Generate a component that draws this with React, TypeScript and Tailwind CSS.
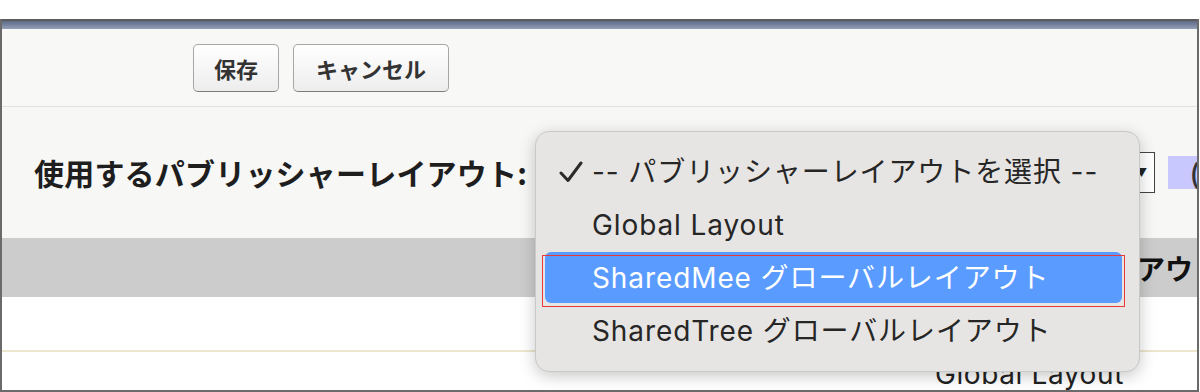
import React from 'react';

const jp = { fontFamily: '"Noto Sans CJK JP", "Noto Sans", sans-serif' };
const menuFont = { fontFamily: 'Inter, "Noto Sans CJK JP", sans-serif' };

function Btn({ label, width }: { label: string; width: string }) {
  return (
    <button
      className={`${width} h-[48px] rounded-[5px] border border-[#a6a6a6] border-b-[#7d7d7d] bg-gradient-to-b from-white to-[#ededed] text-[22px] font-bold text-[#333] leading-none`}
      style={jp}
    >
      {label}
    </button>
  );
}

const options = [
  { label: '-- パブリッシャーレイアウトを選択 --', checked: true },
  { label: 'Global Layout' },
  { label: 'SharedMee グローバルレイアウト', active: true },
  { label: 'SharedTree グローバルレイアウト' },
];

export default function App() {
  return (
    <div className="h-[392px] w-[1200px] overflow-hidden bg-white pt-[19px]">
      <div className="relative h-[373px] w-[1199px] overflow-hidden whitespace-nowrap border-x-2 border-b-2 border-[#6a6a6a]">
        {/* title strip */}
        <div className="h-[10px] border-t-2 border-[#5c5c5c] bg-gradient-to-b from-[#5d6a86] to-[#95a0b8]" />

        {/* buttons */}
        <div className="flex h-[78px] items-center gap-[14px] border-b border-[#e3e3e1] bg-[#f8f8f6] pl-[191px]">
          <Btn label="保存" width="w-[86px]" />
          <Btn label="キャンセル" width="w-[156px]" />
        </div>

        {/* layout select row */}
        <div className="flex h-[131px] items-center bg-[#f7f7f5] pl-[32px]" style={jp}>
          <span className="text-[30px] font-bold tracking-[0.2px] text-[#1e1e1e]">使用するパブリッシャーレイアウト:</span>
          <div className="flex-1" />
          <div className="flex h-[41px] w-[180px] items-center justify-end border border-[#444] bg-white pr-[7px] text-[#222]">
            <span className="text-[11px]">▼</span>
          </div>
          <div className="-mr-[11px] ml-[13px] flex h-[33px] w-[40px] items-center bg-[#c8c8ff] pl-[22px] text-[26px] font-bold text-[#333]">
            (
          </div>
        </div>

        {/* header band */}
        <div className="flex h-[59px] items-center bg-[#cccccc] pl-[1079px]" style={jp}>
          <span className="text-[28px] font-bold text-[#111]">レイアウ</span>
        </div>

        {/* rows */}
        <div className="h-[55px] border-b-2 border-[#ebe6cc] bg-white" />
        <div className="flex h-[40px] items-start bg-white pl-[933px] pt-[8px]" style={menuFont}>
          <span className="text-[28px] leading-none tracking-[0.6px] text-[#222]">Global Layout</span>
        </div>

        {/* open dropdown menu */}
        <div
          className="absolute left-[533px] top-[112px] w-[605px] rounded-[14px] border border-[#c9c9c7] bg-[#e6e5e3] pb-[13px] pt-[14px] shadow-[0_4px_16px_rgba(0,0,0,0.22)]"
          style={menuFont}
        >
          {options.map((o) => (
            <div key={o.label} className="relative mx-[9px] mr-[17px] h-[53px]">
              <div
                className={`flex h-[51px] items-center rounded-[6px] pl-[47px] text-[28px] tracking-[0.9px] ${
                  o.active ? 'bg-[#5a9bff] text-white' : 'text-[#262626]'
                }`}
              >
                {o.checked && (
                  <svg className="absolute left-[14px] top-[15px]" width="24" height="22" viewBox="0 0 24 22">
                    <path d="M2 12 L9 19.5 L22 2" fill="none" stroke="#2a2a2a" strokeWidth="3" strokeLinecap="round" strokeLinejoin="round" />
                  </svg>
                )}
                {o.label}
              </div>
              {o.active && (
                <div className="pointer-events-none absolute -left-[3px] top-[3px] h-[52px] w-[583px] border border-[#e83a3a]" />
              )}
            </div>
          ))}
        </div>
      </div>
    </div>
  );
}
